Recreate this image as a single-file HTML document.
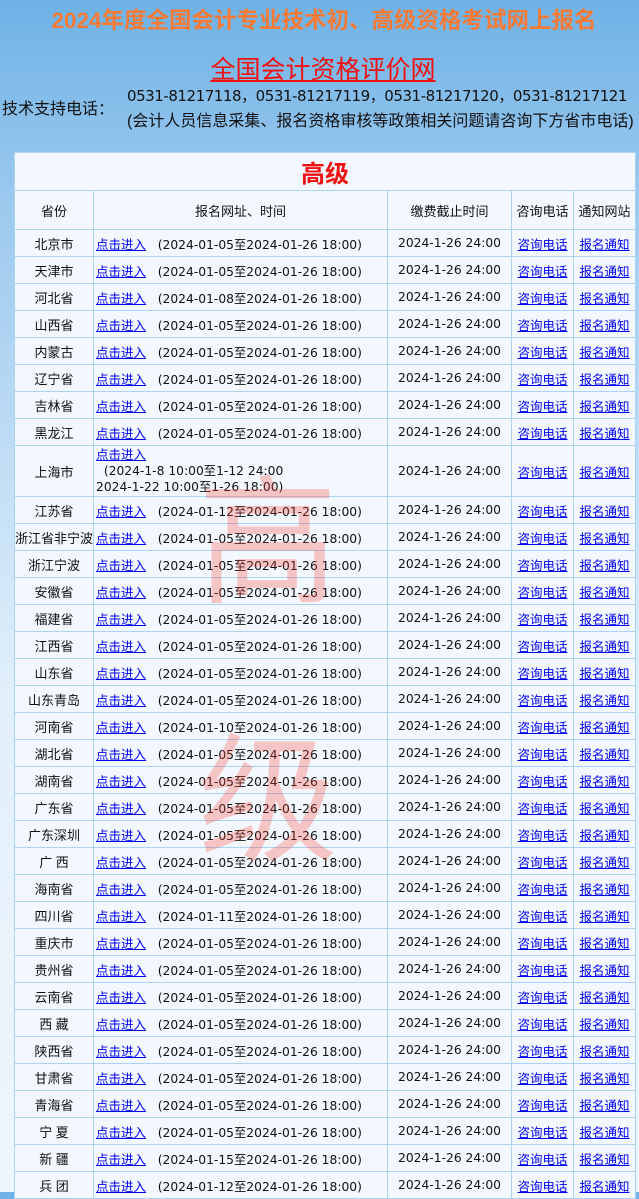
<!DOCTYPE html>
<html><head><meta charset="utf-8">
<style>
html,body{margin:0;padding:0}
body{width:639px;height:1192px;overflow:hidden;background:linear-gradient(#6eb2e6 0px,#9cc9ee 200px,#e2f0fb 700px,#eef6fd 1192px);font-family:"DejaVu Sans","Noto Sans CJK SC",sans-serif;position:relative}
.t1{position:absolute;top:3px;left:0;width:648px;text-align:center;color:#f87a35;font:bold 22.5px "Liberation Sans","Noto Sans CJK SC",sans-serif}
.t2{position:absolute;top:50px;left:0;width:646px;text-align:center;font:25px "Liberation Sans","Noto Sans CJK SC",sans-serif;color:#f01010;text-decoration:underline}
.lab{position:absolute;left:2px;top:95px;font:16px "Liberation Sans","Noto Sans CJK SC",sans-serif;color:#111}
.ph{position:absolute;left:127px;top:86px;font:15px "DejaVu Sans","Noto Sans CJK SC",sans-serif;color:#111;line-height:21px;white-space:nowrap;letter-spacing:-0.45px}
.ph2{position:absolute;left:127px;top:107px;font:16px "Liberation Sans","Noto Sans CJK SC",sans-serif;color:#111;white-space:nowrap}
table{position:absolute;left:14px;top:152px;width:621px;border-collapse:collapse;background:#f2f8fe;table-layout:fixed}
td{border:1px solid #a9d4f6;height:26px;padding:0;font-size:12.3px;color:#111;text-align:center;white-space:nowrap;overflow:hidden}
td.u{text-align:left;padding-left:2px}
a{color:#00e;text-decoration:underline;font-family:"Liberation Sans","Noto Sans CJK SC",sans-serif;font-size:12.5px}
.pv{font-family:"Liberation Sans","Noto Sans CJK SC",sans-serif;font-size:13px}
.big{height:37px;color:#f01010;font:bold 24px "Liberation Sans","Noto Sans CJK SC",sans-serif}
.hd td{height:38px;font-family:"Liberation Sans","Noto Sans CJK SC",sans-serif;font-size:13px}
.wm{position:absolute;left:198px;font:140px "Noto Sans CJK SC",sans-serif;color:rgba(255,60,50,0.28);line-height:140px;pointer-events:none}
</style></head><body>
<div class="t1">2024年度全国会计专业技术初、高级资格考试网上报名</div>
<div class="t2">全国会计资格评价网</div>
<div class="lab">技术支持电话：</div>
<div class="ph">0531-81217118，0531-81217119，0531-81217120，0531-81217121</div>
<div class="ph2">(会计人员信息采集、报名资格审核等政策相关问题请咨询下方省市电话)</div>
<table>
<colgroup><col style="width:79px"><col style="width:294px"><col style="width:124px"><col style="width:62px"><col style="width:62px"></colgroup>
<tr><td colspan="5" class="big">高级</td></tr>
<tr class="hd"><td>省份</td><td>报名网址、时间</td><td>缴费截止时间</td><td>咨询电话</td><td>通知网站</td></tr>
<tbody id="tb"></tbody>
</table>
<div class="wm" style="top:462px">高</div>
<div class="wm" style="top:720px">级</div>
<script>
var rows=[["北京市","05"],["天津市","05"],["河北省","08"],["山西省","05"],["内蒙古","05"],["辽宁省","05"],["吉林省","05"],["黑龙江","05"],["上海市",""],["江苏省","12"],["浙江省非宁波","05"],["浙江宁波","05"],["安徽省","05"],["福建省","05"],["江西省","05"],["山东省","05"],["山东青岛","05"],["河南省","10"],["湖北省","05"],["湖南省","05"],["广东省","05"],["广东深圳","05"],["广 西","05"],["海南省","05"],["四川省","11"],["重庆市","05"],["贵州省","05"],["云南省","05"],["西 藏","05"],["陕西省","05"],["甘肃省","05"],["青海省","05"],["宁 夏","05"],["新 疆","15"],["兵 团","12"]];
var h="";
rows.forEach(function(r){
 var mid;
 if(r[1]===""){mid='<td class="u" style="height:50px;line-height:16px"><a>点击进入</a><br>&nbsp;&nbsp;(2024-1-8 10:00至1-12 24:00<br>2024-1-22 10:00至1-26 18:00)</td>';}
 else mid='<td class="u"><a>点击进入</a>&nbsp;&nbsp;&nbsp;(2024-01-'+r[1]+'至2024-01-26 18:00)</td>';
 h+='<tr><td class="pv">'+r[0]+'</td>'+mid+'<td>2024-1-26 24:00</td><td><a>咨询电话</a></td><td><a>报名通知</a></td></tr>';
});
document.getElementById("tb").innerHTML=h;
</script>
</body></html>
